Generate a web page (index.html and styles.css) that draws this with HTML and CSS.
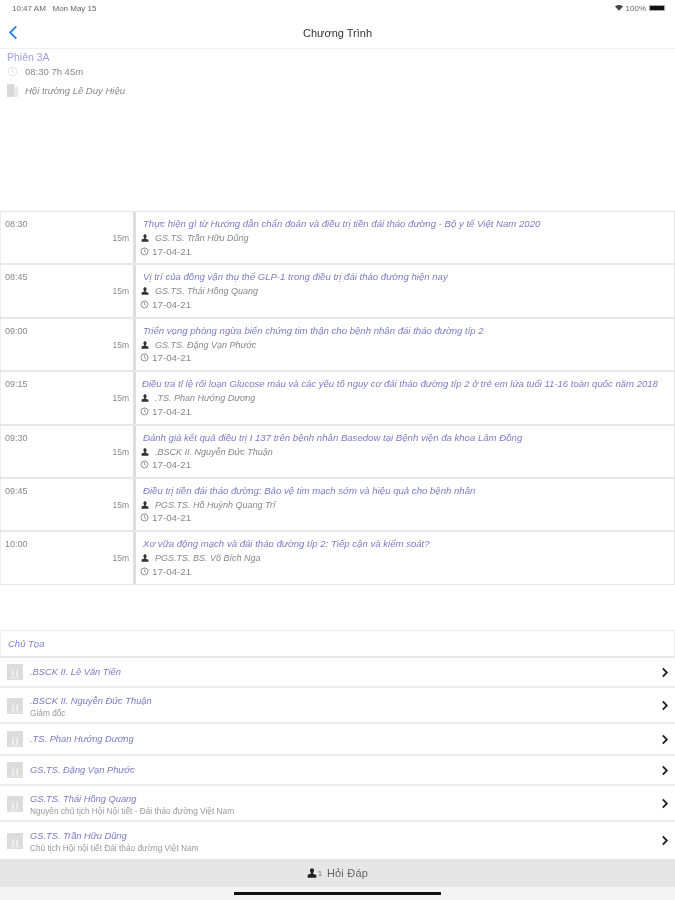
FILE: index.html
```html
<!DOCTYPE html>
<html lang="vi">
<head>
<meta charset="utf-8">
<title>Chương Trình</title>
<link rel="stylesheet" href="styles.css">
</head>
<body>
<svg class="defs" width="0" height="0" aria-hidden="true">
  <symbol id="person" viewBox="0 0 10 10"><path d="M3 2.500C3 1 4 .3 5 .3s2 .7 2 2.200c0 1.200-.5 2-1 2.500v.8l3.300 1.300V9.700H.7V6.800L4 5.500v-.5c-.5-.5-1-1.300-1-2.500z"/></symbol>
  <symbol id="clock" viewBox="0 0 10 10"><circle cx="5" cy="5" r="3.900" fill="none" stroke="currentColor" stroke-width=".9"/><path d="M5 2.600V5.200L6.600 6.200" fill="none" stroke="currentColor" stroke-width=".8"/></symbol>
  <symbol id="thumb" viewBox="0 0 16 16"><rect width="16" height="16" fill="#dcdcdc"/><path d="M5 13V6.500h2V13zM9 13V6.500h2V13z" fill="#eeeeee"/><path d="M3 13.500h10v1H3z" fill="#eeeeee"/></symbol>
  <symbol id="chev" viewBox="0 0 8 12"><path d="M1.600 1.500L6 6 1.600 10.500" fill="none" stroke="currentColor" stroke-width="2"/></symbol>
</svg>
<div class="page">
  <header class="top">
    <div class="status">
      <span class="status-time">10:47 AM &nbsp; Mon May 15</span>
      <span class="status-right">
        <svg class="wifi" viewBox="0 0 12 9"><path d="M6 8.500L0 2.400C3.500-.6 8.500-.6 12 2.400z"/></svg>
        <span>100%</span>
        <span class="battery"><span class="battery-fill"></span></span>
      </span>
    </div>
    <div class="nav">
      <svg class="back" viewBox="0 0 10 16"><path d="M8.500 1.500L2 8l6.500 6.500" fill="none" stroke="currentColor" stroke-width="2"/></svg>
      <span class="nav-title">Chương Trình</span>
    </div>
  </header>

  <section class="session">
    <div class="session-name">Phiên 3A</div>
    <div class="session-line">
      <svg class="session-clock"><use href="#clock"/></svg>
      <span>08:30 7h 45m</span>
    </div>
    <div class="session-line session-room">
      <svg class="session-book" viewBox="0 0 12 14"><path d="M0 0h8v14H0z" fill="#d8d8d8"/><path d="M8 3h4v11H8z" fill="#e8e8e8"/></svg>
      <i>Hội trường Lê Duy Hiệu</i>
    </div>
  </section>

  <section class="schedule">
    <article class="talk">
      <div class="when"><span class="time">08:30</span><span class="dur">15m</span></div>
      <div class="info"><div class="talk-title">Thực hiện gì từ Hướng dẫn chẩn đoán và điều trị tiền đái tháo đường - Bộ y tế Việt Nam 2020</div>
        <div class="meta"><svg class="ico"><use href="#person"/></svg><i>GS.TS. Trần Hữu Dũng</i></div>
        <div class="meta date"><svg class="ico"><use href="#clock"/></svg>17-04-21</div></div>
    </article>
    <article class="talk">
      <div class="when"><span class="time">08:45</span><span class="dur">15m</span></div>
      <div class="info"><div class="talk-title">Vị trí của đồng vận thụ thể GLP-1 trong điều trị đái tháo đường hiện nay</div>
        <div class="meta"><svg class="ico"><use href="#person"/></svg><i>GS.TS. Thái Hồng Quang</i></div>
        <div class="meta date"><svg class="ico"><use href="#clock"/></svg>17-04-21</div></div>
    </article>
    <article class="talk">
      <div class="when"><span class="time">09:00</span><span class="dur">15m</span></div>
      <div class="info"><div class="talk-title">Triển vọng phòng ngừa biến chứng tim thận cho bệnh nhân đái tháo đường típ 2</div>
        <div class="meta"><svg class="ico"><use href="#person"/></svg><i>GS.TS. Đặng Vạn Phước</i></div>
        <div class="meta date"><svg class="ico"><use href="#clock"/></svg>17-04-21</div></div>
    </article>
    <article class="talk">
      <div class="when"><span class="time">09:15</span><span class="dur">15m</span></div>
      <div class="info"><div class="talk-title tight">Điều tra tỉ lệ rối loạn Glucose máu và các yếu tố nguy cơ đái tháo đường típ 2 ở trẻ em lứa tuổi 11-16 toàn quốc năm 2018</div>
        <div class="meta"><svg class="ico"><use href="#person"/></svg><i>.TS. Phan Hướng Dương</i></div>
        <div class="meta date"><svg class="ico"><use href="#clock"/></svg>17-04-21</div></div>
    </article>
    <article class="talk">
      <div class="when"><span class="time">09:30</span><span class="dur">15m</span></div>
      <div class="info"><div class="talk-title">Đánh giá kết quả điều trị I 137 trên bệnh nhân Basedow tại Bệnh viện đa khoa Lâm Đồng</div>
        <div class="meta"><svg class="ico"><use href="#person"/></svg><i>.BSCK II. Nguyễn Đức Thuận</i></div>
        <div class="meta date"><svg class="ico"><use href="#clock"/></svg>17-04-21</div></div>
    </article>
    <article class="talk">
      <div class="when"><span class="time">09:45</span><span class="dur">15m</span></div>
      <div class="info"><div class="talk-title">Điều trị tiền đái tháo đường: Bảo vệ tim mạch sớm và hiệu quả cho bệnh nhân</div>
        <div class="meta"><svg class="ico"><use href="#person"/></svg><i>PGS.TS. Hồ Huỳnh Quang Trí</i></div>
        <div class="meta date"><svg class="ico"><use href="#clock"/></svg>17-04-21</div></div>
    </article>
    <article class="talk">
      <div class="when"><span class="time">10:00</span><span class="dur">15m</span></div>
      <div class="info"><div class="talk-title">Xơ vữa động mạch và đái tháo đường típ 2: Tiếp cận và kiểm soát?</div>
        <div class="meta"><svg class="ico"><use href="#person"/></svg><i>PGS.TS. BS. Võ Bích Nga</i></div>
        <div class="meta date"><svg class="ico"><use href="#clock"/></svg>17-04-21</div></div>
    </article>
  </section>

  <section class="chairs">
    <div class="chairs-head">Chủ Tọa</div>
    <a class="chair h30"><svg class="thumb"><use href="#thumb"/></svg><div class="chair-text"><div class="chair-name">.BSCK II. Lê Văn Tiến</div></div><svg class="chev"><use href="#chev"/></svg></a>
    <a class="chair h36"><svg class="thumb"><use href="#thumb"/></svg><div class="chair-text"><div class="chair-name">.BSCK II. Nguyễn Đức Thuận</div><div class="chair-sub">Giám đốc</div></div><svg class="chev"><use href="#chev"/></svg></a>
    <a class="chair h32"><svg class="thumb"><use href="#thumb"/></svg><div class="chair-text"><div class="chair-name">.TS. Phan Hướng Dương</div></div><svg class="chev"><use href="#chev"/></svg></a>
    <a class="chair h30"><svg class="thumb"><use href="#thumb"/></svg><div class="chair-text"><div class="chair-name">GS.TS. Đặng Vạn Phước</div></div><svg class="chev"><use href="#chev"/></svg></a>
    <a class="chair h36"><svg class="thumb"><use href="#thumb"/></svg><div class="chair-text"><div class="chair-name">GS.TS. Thái Hồng Quang</div><div class="chair-sub">Nguyên chủ tịch Hội Nội tiết - Đái tháo đường Việt Nam</div></div><svg class="chev"><use href="#chev"/></svg></a>
    <a class="chair h36 last"><svg class="thumb"><use href="#thumb"/></svg><div class="chair-text"><div class="chair-name">GS.TS. Trần Hữu Dũng</div><div class="chair-sub">Chủ tịch Hội nội tiết Đái tháo đường Việt Nam</div></div><svg class="chev"><use href="#chev"/></svg></a>
  </section>

  <footer class="bottom">
    <div class="qa"><svg class="qa-ico"><use href="#person"/></svg><span class="qa-count">1</span> <span class="qa-label">Hỏi Đáp</span></div>
    <div class="home"><span class="home-bar"></span></div>
  </footer>
</div>
</body>
</html>
```

FILE: styles.css
```css
* { box-sizing: border-box; }
html, body { margin: 0; padding: 0; background: #fff; }
body { font-family: "Liberation Sans", Arial, sans-serif; color: #555; }
.defs { position: absolute; }
.page { width: 675px; height: 900px; display: flex; flex-direction: column; overflow: hidden; filter: blur(.6px); }

.top { height: 49px; border-bottom: 1px solid #f0f0f0; flex: none; }
.status { height: 15px; display: flex; justify-content: space-between; align-items: center; padding: 1px 10px 0 12px; font-size: 8px; color: #666; }
.status-right { display: flex; align-items: center; gap: 3px; }
.wifi { width: 8px; height: 6px; fill: #444; }
.battery { width: 16px; height: 6px; border: 1px solid #aaa; display: flex; }
.battery-fill { flex: 1; background: #111; }
.nav { height: 33px; display: flex; align-items: center; justify-content: center; position: relative; }
.back { position: absolute; left: 8px; top: 10px; width: 10px; height: 15px; color: #2f7fe6; }
.nav-title { font-size: 11px; color: #333; padding-top: 2px; }

.session { height: 162px; flex: none; padding: 2px 0 0 7px; }
.session-name { font-size: 10.500px; line-height: 13px; color: #a0a0e0; }
.session-line { display: flex; align-items: center; gap: 7px; height: 14px; font-size: 9.500px; color: #888; }
.session-room { margin-top: 5px; }
.session-clock { width: 11px; height: 11px; color: #e2e2e2; flex: none; }
.session-book { width: 11px; height: 13px; flex: none; }

.schedule { flex: none; border-top: 1px solid #e6e6e6; border-bottom: 1px solid #e6e6e6; }
.talk { display: grid; grid-template-columns: 133px 1fr; height: 53.400px; border-bottom: 2px solid #e8e8e8; }
.talk:last-child { border-bottom: 0; height: 52px; }
.when { border-left: 1px solid #eeeeee; border-right: 3px solid #dedede; width: 136px; padding: 5px 4px 0 4px; display: flex; flex-direction: column; font-size: 9px; color: #888; }
.time { line-height: 14px; }
.dur { text-align: right; line-height: 14px; font-size: 8.500px; }
.info { padding: 5px 0 0 8px; border-right: 1px solid #e8e8e8; }
.talk-title { font-size: 9.600px; font-style: italic; line-height: 14px; color: #7c7cc4; white-space: nowrap; margin-left: 2px; }
.talk-title.tight { font-size: 9.550px; margin-left: 1px; }
.meta { display: flex; align-items: center; height: 14px; font-size: 9px; color: #888; }
.meta.date { font-size: 9.800px; margin-top: -1px; margin-left: -1px; }
.ico { width: 8px; height: 8px; margin-right: 6px; flex: none; fill: #333; color: #777; }
.date .ico { width: 9px; height: 9px; margin-right: 3px; }

.chairs { margin-top: 45px; flex: none; height: 229px; display: flex; flex-direction: column; border-top: 1px solid #eeeeee; }
.chairs-head { height: 27px; flex: none; border-left: 1px solid #eee; border-right: 1px solid #eee; border-bottom: 2px solid #e8e8e8; padding: 7px 0 0 7px; font-size: 9.500px; font-style: italic; color: #8080e0; }
.chair { display: flex; align-items: center; padding: 0 6px 0 7px; border-bottom: 2px solid #ececec; flex: none; }
.h30 { height: 30px; }
.h32 { height: 32px; }
.h36 { height: 36px; }
.chair.h36 .chair-text { padding-top: 4px; }
.chair.h36 .thumb { margin-top: 2px; }
.chair.last { border-bottom: 0; }
.thumb { width: 16px; height: 16px; flex: none; }
.chair-text { flex: 1; padding-left: 7px; min-width: 0; }
.chair-name { font-size: 9.300px; line-height: 13px; font-style: italic; color: #7c7cc4; }
.chair-sub { font-size: 8.300px; line-height: 11px; color: #999; }
.chev { width: 8px; height: 11px; color: #222; flex: none; }

.bottom { flex: 1; display: flex; flex-direction: column; }
.qa { height: 28px; flex: none; background: #e6e6e6; display: flex; align-items: center; justify-content: center; gap: 3px; font-size: 11px; color: #666; }
.qa-ico { width: 10px; height: 10px; fill: #222; }
.qa-count { font-size: 7px; margin-left: -2px; }
.qa-label { letter-spacing: .2px; margin-left: 2px; }
.home { flex: 1; background: #f4f4f4; display: flex; justify-content: center; padding-top: 5px; }
.home-bar { width: 207px; height: 3px; background: #111; }
```
